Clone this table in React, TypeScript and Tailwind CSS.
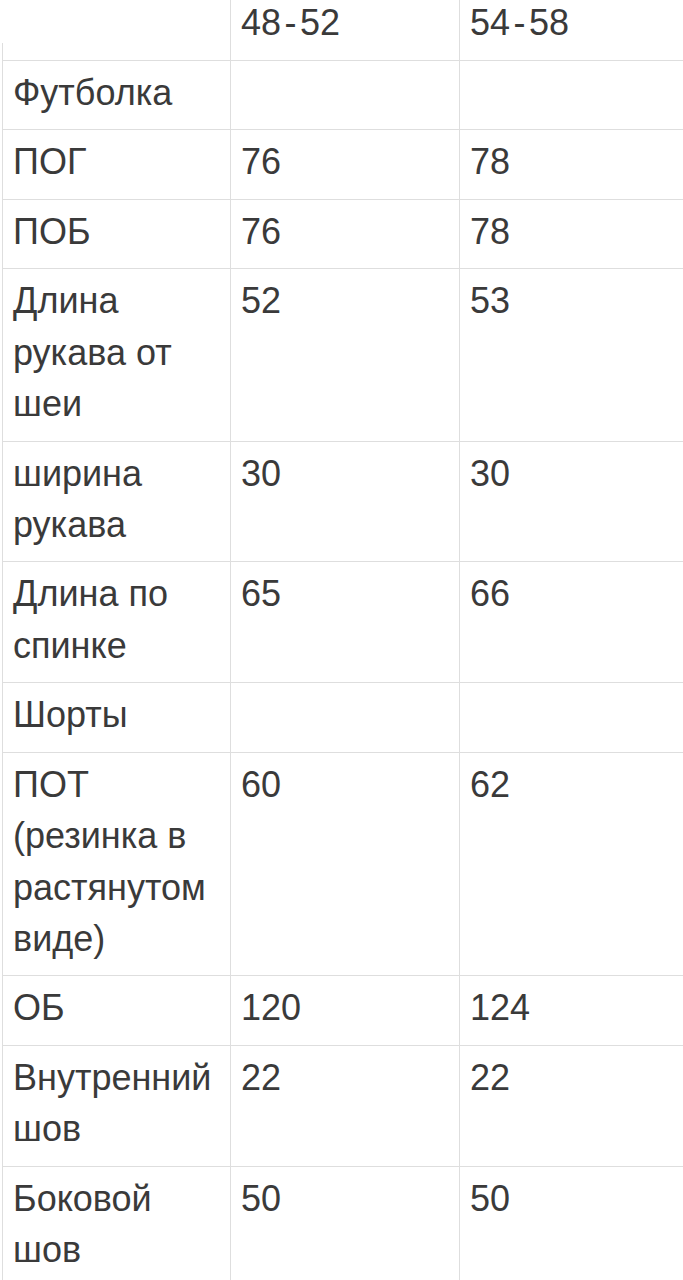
const rows: [string, string, string][] = [
  ['Футболка', '', ''],
  ['ПОГ', '76', '78'],
  ['ПОБ', '76', '78'],
  ['Длина рукава от шеи', '52', '53'],
  ['ширина рукава', '30', '30'],
  ['Длина по спинке', '65', '66'],
  ['Шорты', '', ''],
  ['ПОТ (резинка в растянутом виде)', '60', '62'],
  ['ОБ', '120', '124'],
  ['Внутренний шов', '22', '22'],
  ['Боковой шов', '50', '50'],
];

const cell = 'border-l border-[#dedede] pl-[10px] pr-[8px] pt-[6px] pb-[11.3px]';

function Range({ from, to }: { from: string; to: string }) {
  return (
    <>
      {from}
      <span className="mx-[3.5px]">-</span>
      {to}
    </>
  );
}

export default function App() {
  return (
    <div className="h-[1280px] w-[683px] overflow-hidden bg-white font-['Liberation_Sans',Arial,sans-serif] text-[36px] leading-[51.3px] text-[#3a3a3a]">
      <div className="-mt-[9px] ml-[2px] w-[720px]">
        <div className="grid grid-cols-[228px_229px_1fr] border-b border-[#dedede]">
          <div className="flex flex-col justify-end">
            <div className="h-[17px] border-l border-[#dedede]" />
          </div>
          <div className={cell}>
            <Range from="48" to="52" />
          </div>
          <div className={cell}>
            <Range from="54" to="58" />
          </div>
        </div>
        {rows.map(([name, a, b]) => (
          <div key={name} className="grid grid-cols-[228px_229px_1fr] border-b border-[#dedede]">
            <div className={cell}>{name}</div>
            <div className={cell}>{a}</div>
            <div className={cell}>{b}</div>
          </div>
        ))}
      </div>
    </div>
  );
}
